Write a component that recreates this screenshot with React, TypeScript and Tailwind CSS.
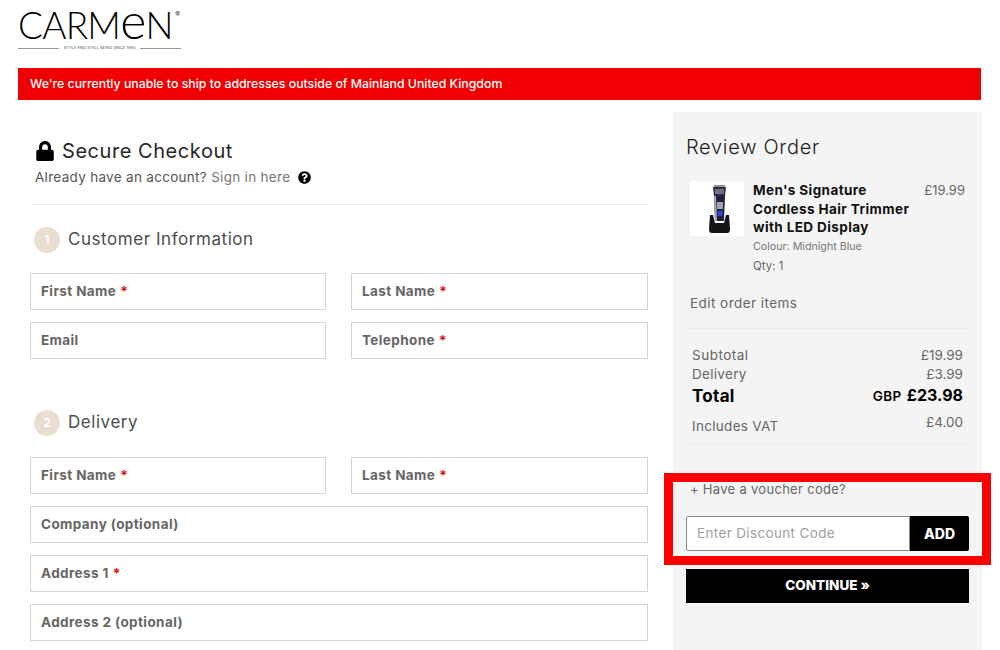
import React from 'react';
import { FaLock, FaQuestionCircle } from 'react-icons/fa';

const font = { fontFamily: 'Inter, "Noto Sans", sans-serif' };

function Field({ label, required, className }: { label: string; required?: boolean; className?: string }) {
  return (
    <div className={`h-[37px] flex items-center pl-[10px] bg-white border border-[#d4d4d4] text-[13.5px] font-bold tracking-[0.4px] text-[#666] ${className ?? ''}`}>
      <span>{label}</span>
      {required && <span className="ml-1 text-[#e01010]">*</span>}
    </div>
  );
}

function StepHeading({ n, title }: { n: number; title: string }) {
  return (
    <div className="flex items-center pl-1">
      <div className="w-[26px] h-[26px] rounded-full bg-[#e9dfd0] flex items-center justify-center text-[12px] font-bold text-white">{n}</div>
      <h2 className="ml-2 text-[17px] tracking-[0.55px] text-[#4d4d4d]">{title}</h2>
    </div>
  );
}

function Trimmer() {
  return (
    <svg width="54" height="55" viewBox="0 0 54 55">
      <rect x="24" y="4" width="11" height="2" fill="#8d8f9c" />
      <path d="M23 6h13l-1 9H24z" fill="#2b2e45" />
      <rect x="25" y="8" width="9" height="5" fill="#6f7488" />
      <path d="M24 15h11l-1 25H25z" fill="#1e2138" />
      <path d="M24 15h2l1 25h-2z" fill="#a6a9b8" />
      <rect x="27" y="21" width="6" height="7" fill="#9ea3b5" />
      <rect x="27.5" y="30" width="5" height="5" fill="#3a3fd8" />
      <path d="M20 34h3l2 8h9l2-8h3l1 14c0 3-1 4-3 4H22c-2 0-3-1-3-4z" fill="#141418" />
    </svg>
  );
}

export default function App() {
  return (
    <div className="relative w-full h-[650px] overflow-hidden bg-white" style={font}>
      {/* logo */}
      <div className="h-[68px] pl-[18px] pt-[8px]">
        <div className="w-[163px]">
          <div className="flex items-start h-[34px]">
            <div className="text-[37px] leading-[34px] tracking-[-0.8px] text-black whitespace-nowrap" style={{ fontFamily: 'Lato, sans-serif', fontWeight: 300 }}>
              CARM<span className="lowercase text-[50px] leading-[0]">E</span>N
            </div>
            <span className="ml-auto mt-[2px] mr-[1px] text-[7px] leading-[10px] text-[#333]">®</span>
          </div>
          <div className="flex items-center gap-[4px] mt-[2px]">
            <div className="h-px flex-1 bg-[#999]" />
            <span className="text-[4px] leading-[8px] text-[#555] whitespace-nowrap">STYLE AND STELL BEING SINCE 1965</span>
            <div className="h-px flex-1 bg-[#999]" />
          </div>
        </div>
      </div>

      {/* shipping notice */}
      <div className="ml-[18px] w-[963px] h-[32px] bg-[#f00000] flex items-center pl-3 text-[12.3px] font-medium text-white">
        We're currently unable to ship to addresses outside of Mainland United Kingdom
      </div>

      <div className="flex mt-3 pl-[30px]">
        {/* left column */}
        <div className="w-[618px] shrink-0">
          <div className="flex items-center pl-[5px] pt-[27px]">
            <FaLock className="text-[20px] text-black" />
            <h1 className="ml-[7px] text-[20px] leading-[24px] tracking-[0.55px] text-[#262626]">Secure Checkout</h1>
          </div>
          <div className="flex items-center pl-[5px] mt-[6px] h-[16px] text-[13.5px] tracking-[0.3px] text-[#555]">
            <span>Already have an account? <span className="text-[#777]">Sign in here</span></span>
            <FaQuestionCircle className="ml-2 text-[13px] text-black" />
          </div>
          <div className="h-px bg-[#eeeeee] mt-[19px]" />

          <div className="mt-[22px]">
            <StepHeading n={1} title="Customer Information" />
          </div>
          <div className="grid grid-cols-[296px_297px] gap-x-[25px] gap-y-[12px] mt-[20px]">
            <Field label="First Name" required />
            <Field label="Last Name" required />
            <Field label="Email" />
            <Field label="Telephone" required />
          </div>

          <div className="mt-[51px]">
            <StepHeading n={2} title="Delivery" />
          </div>
          <div className="grid grid-cols-[296px_297px] gap-x-[25px] gap-y-[12px] mt-[21px]">
            <Field label="First Name" required />
            <Field label="Last Name" required />
            <Field label="Company (optional)" className="col-span-2" />
            <Field label="Address 1" required className="col-span-2" />
            <Field label="Address 2 (optional)" className="col-span-2" />
          </div>
        </div>

        {/* order summary */}
        <div className="ml-[25px] w-[309px] h-[538px] shrink-0 bg-[#f4f4f4] px-[13px] pt-[23px]">
          <h2 className="text-[20px] leading-[24px] font-light tracking-[0.7px] text-[#222]">Review Order</h2>
          <div className="flex mt-[22px] pl-1">
            <div className="w-[54px] h-[55px] bg-white shrink-0"><Trimmer /></div>
            <div className="ml-[9px] w-[168px]">
              <div className="text-[13.5px] leading-[18.5px] font-bold tracking-[0.4px] text-[#111]">Men's Signature Cordless Hair Trimmer with LED Display</div>
              <div className="mt-[3px] text-[10.7px] leading-[14px] text-[#777]">Colour: Midnight Blue</div>
              <div className="mt-[5px] text-[11.5px] leading-[14px] text-[#666]">Qty: 1</div>
            </div>
            <div className="ml-auto mr-[4px] text-[13px] leading-[18px] text-[#666]">£19.99</div>
          </div>
          <div className="pl-1 mt-[21px] text-[13.5px] leading-[18px] tracking-[0.45px] text-[#666]">Edit order items</div>
          <div className="h-px bg-[#ececec] mt-[16px]" />
          <div className="px-[6px] mt-[17px] text-[13.5px] leading-[19px] text-[#666]">
            <div className="flex justify-between"><span className="tracking-[0.5px]">Subtotal</span><span>£19.99</span></div>
            <div className="flex justify-between"><span className="tracking-[0.3px]">Delivery</span><span>£3.99</span></div>
            <div className="flex justify-between items-center h-[25px] text-black">
              <span className="text-[17px] font-bold tracking-[0.3px]">Total</span>
              <span className="font-bold"><span className="text-[13.5px] font-semibold tracking-[0.4px]">GBP</span> <span className="text-[16px] ml-[2px]">£23.98</span></span>
            </div>
            <div className="flex justify-between items-start mt-[4px] h-[31px]">
              <span className="mt-[4px] tracking-[0.3px]">Includes VAT</span><span>£4.00</span>
            </div>
          </div>
          <div className="h-px bg-[#ececec]" />
          <div className="pl-1 mt-[35px] text-[13px] leading-[18px] tracking-[0.3px] text-[#666]">+ Have a voucher code?</div>
          <div className="flex mt-[18px] h-[35px]">
            <div className="flex-1 flex items-center pl-[10px] bg-white border border-[#8a8a8a] rounded-l-[2px] text-[13.5px] tracking-[0.35px] text-[#a0a0a0]">Enter Discount Code</div>
            <button className="w-[59px] bg-black rounded-r-[2px] text-[14px] font-extrabold text-white">ADD</button>
          </div>
          <button className="block w-full h-[34px] mt-[18px] bg-black text-[13.5px] font-extrabold text-white">CONTINUE »</button>
        </div>
      </div>

      {/* highlight frame drawn on top of the voucher area */}
      <div className="absolute left-[664px] top-[473px] w-[327px] h-[92px] border-[9px] border-[#ff0000] pointer-events-none" />
    </div>
  );
}
